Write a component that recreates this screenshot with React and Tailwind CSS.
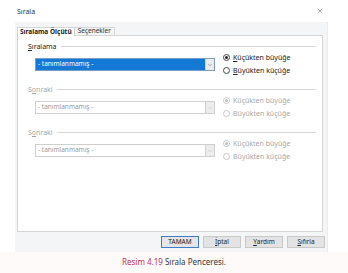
import { X, ChevronDown } from "lucide-react";

const font = { fontFamily: '"Noto Sans", "Open Sans", sans-serif' };

// one letter underlined, like a Windows accelerator key
function Acc({ text, at = 0 }) {
  return (
    <>
      {text.slice(0, at)}
      <span className="underline">{text[at]}</span>
      {text.slice(at + 1)}
    </>
  );
}

function Radio({ checked, disabled, children }) {
  return (
    <div className="h-[13px] flex items-center gap-[3px]">
      <span
        className={
          "w-[7px] h-[7px] rounded-full border flex items-center justify-center bg-white " +
          (disabled ? "border-[#c8c8c8]" : "border-[#444]")
        }
      >
        {checked && (
          <span className={"w-[3px] h-[3px] rounded-full " + (disabled ? "bg-[#c0c0c0]" : "bg-[#222]")} />
        )}
      </span>
      <span className={"text-[7px] leading-none " + (disabled ? "text-[#a8a8a8]" : "text-[#222]")}>
        {children}
      </span>
    </div>
  );
}

function Combo({ active }) {
  return (
    <div
      className={
        "mt-[7px] w-[180px] h-[13px] flex border " +
        (active ? "border-[#7a9cc6]" : "border-[#cfcfcf]")
      }
    >
      <div
        className={
          "flex-1 flex items-center pl-[2px] text-[6.5px] leading-none " +
          (active ? "bg-[#1479d4] text-white" : "bg-white text-[#9a9a9a]")
        }
      >
        - tanımlanmamış -
      </div>
      <div className="w-[9px] border-l border-[#d0d0d0] bg-[#ececec] flex items-center justify-center">
        <ChevronDown size={6} strokeWidth={2} className={active ? "text-[#666]" : "text-[#bbb]"} />
      </div>
    </div>
  );
}

function Section({ label, active, first }) {
  return (
    <div className="h-[43px] flex flex-col">
      <div className="h-[10px] flex items-center pl-[10px] pr-[6px]">
        <span className={"text-[7px] leading-none " + (first ? "text-[#222]" : "text-[#a8a8a8]")}>
          <Acc text={label} at={first ? 0 : 1} />
        </span>
        <div className="flex-1 h-px bg-[#d6d6d6] ml-[4px]" />
      </div>
      <div className="flex pl-[17px] gap-[8px]">
        <Combo active={active} />
        <div className="flex flex-col">
          <Radio checked disabled={!active}>
            {active ? <Acc text="Küçükten büyüğe" /> : "Küçükten büyüğe"}
          </Radio>
          <Radio disabled={!active}>
            {active ? <Acc text="Büyükten küçüğe" /> : "Büyükten küçüğe"}
          </Radio>
        </div>
      </div>
    </div>
  );
}

function Btn({ children, primary }) {
  return (
    <div
      className={
        "w-[38px] h-[12px] flex items-center justify-center text-[6.5px] leading-none text-[#222] border " +
        (primary ? "border-[#3d7cc9] bg-[#e5e5e5]" : "border-[#c9c9c9] bg-[#e3e3e3]")
      }
    >
      {children}
    </div>
  );
}

export default function App() {
  return (
    <div className="w-[348px] h-[273px] bg-white flex flex-col" style={font}>
      <div className="ml-[15px] w-[313px]">
        <div className="h-[22px] flex items-center justify-between pl-[2px] pr-[4px]">
          <span className="text-[7px] leading-none text-[#333]">Sırala</span>
          <X size={8} strokeWidth={1.3} className="text-[#555]" />
        </div>
        <div className="bg-[#f4f5f7] pt-[5px] pl-[2px] pr-[4px] border-r border-[#ececec]">
          <div className="flex items-end h-[8px]">
            <div className="h-[9px] px-[2px] bg-white border border-b-0 border-[#d6d6d6] flex items-center text-[6.5px] font-bold leading-none text-[#222] relative top-px">
              Sıralama Ölçütü
            </div>
            <div className="h-[8px] px-[3px] border border-b-0 border-l-0 border-[#d6d6d6] flex items-center text-[6.5px] leading-none text-[#333]">
              Seçenekler
            </div>
          </div>
          <div className="h-[197px] bg-white border border-[#d6d6d6] pt-[5px]">
            <Section label="Sıralama" active first />
            <Section label="Sonraki" />
            <Section label="Sonraki" />
          </div>
          <div className="h-[20px] flex items-center justify-end gap-[4px] -mr-[2px]">
            <Btn primary>TAMAM</Btn>
            <Btn><Acc text="İptal" /></Btn>
            <Btn><Acc text="Yardım" /></Btn>
            <Btn><Acc text="Sıfırla" /></Btn>
          </div>
        </div>
      </div>
      <div className="flex-1 bg-[#fefafa] flex items-center pl-[122px] pb-[2px]">
        <span className="text-[8px] leading-none">
          <span className="text-[#c2305a]">Resim 4.19</span>{" "}
          <span className="text-[#333]">Sırala Penceresi.</span>
        </span>
      </div>
    </div>
  );
}
